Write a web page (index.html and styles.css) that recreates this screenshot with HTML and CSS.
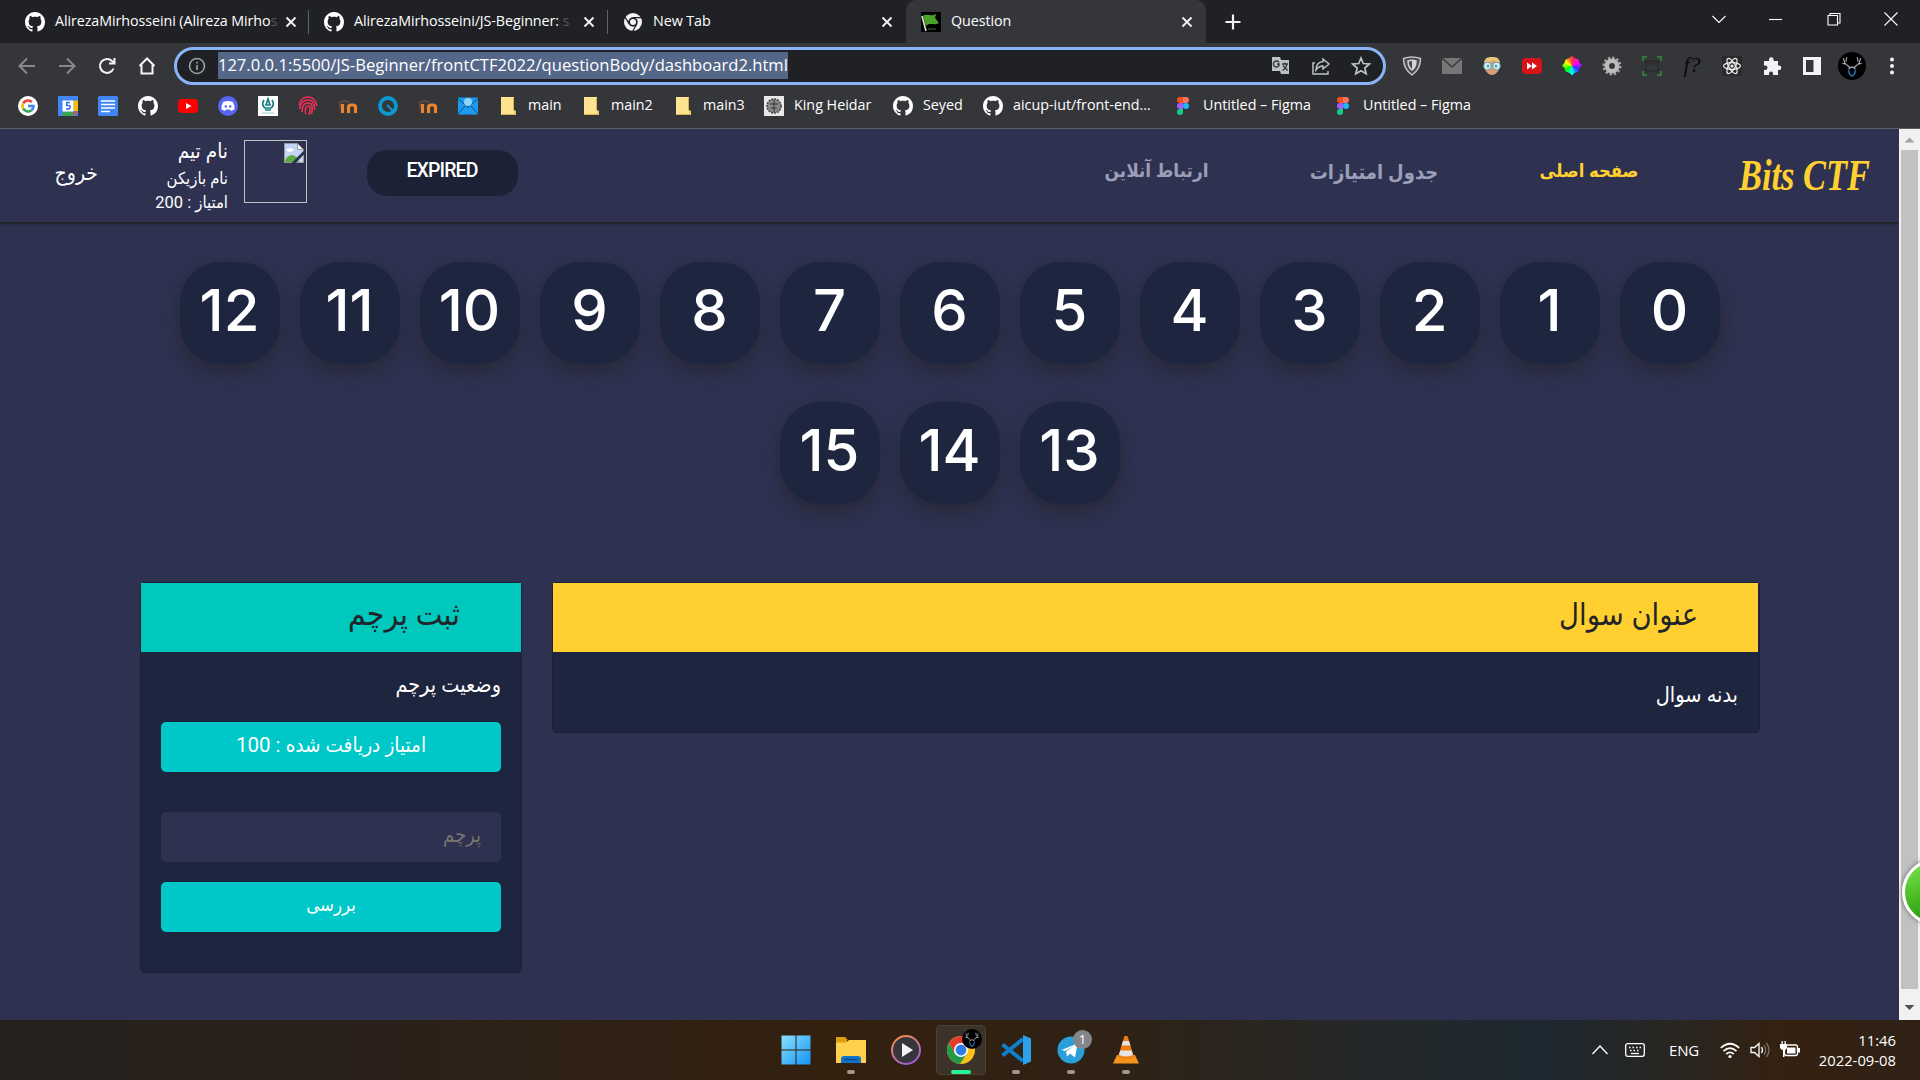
FILE: index.html
```html
<!DOCTYPE html>
<html lang="fa">
<head>
<meta charset="utf-8">
<title>Question</title>
<link rel="stylesheet" href="styles.css">
</head>
<body>
<svg class="defs" width="0" height="0" aria-hidden="true">
  <symbol id="github" viewBox="0 0 16 16"><path fill="#fff" d="M8 0C3.58 0 0 3.58 0 8c0 3.54 2.29 6.53 5.47 7.59.4.07.55-.17.55-.38 0-.19-.01-.82-.01-1.49-2.01.37-2.53-.49-2.69-.94-.09-.23-.48-.94-.82-1.13-.28-.15-.68-.52-.01-.53.63-.01 1.08.58 1.23.82.72 1.21 1.87.87 2.33.66.07-.52.28-.87.51-1.07-1.78-.2-3.64-.89-3.64-3.95 0-.87.31-1.59.82-2.15-.08-.2-.36-1.02.08-2.12 0 0 .67-.21 2.2.82.64-.18 1.32-.27 2-.27s1.36.09 2 .27c1.53-1.04 2.2-.82 2.2-.82.44 1.1.16 1.92.08 2.12.51.56.82 1.27.82 2.15 0 3.07-1.87 3.75-3.65 3.95.29.25.54.73.54 1.48 0 1.07-.01 1.93-.01 2.2 0 .21.15.46.55.38A8.01 8.01 0 0 0 16 8c0-4.42-3.58-8-8-8z"/></symbol>
  <symbol id="x" viewBox="0 0 12 12"><path d="M1.500 1.500l9 9M10.500 1.500l-9 9" stroke="#f1f3f4" stroke-width="1.900"/></symbol>
  <symbol id="folder" viewBox="0 0 20 20"><path fill="#ffe391" d="M3 1h13v13l2 1v4H3z"/><path fill="none" stroke="#d9b24c" d="M3.500 18.500h13.500v-3l-1.500-1V2"/></symbol>
  <symbol id="figma" viewBox="0 0 20 20"><path fill="#f24e1e" d="M10 1H7a3 3 0 0 0 0 6h3z"/><path fill="#ff7262" d="M10 1h3a3 3 0 0 1 0 6h-3z"/><path fill="#a259ff" d="M10 7H7a3 3 0 0 0 0 6h3z"/><circle cx="13" cy="10" r="3" fill="#1abcfe"/><path fill="#0acf83" d="M7 13h3v3a3 3 0 1 1-3-3z"/></symbol>
  <symbol id="moodle" viewBox="0 0 20 20"><path fill="none" stroke="#e98427" stroke-width="3.200" d="M4.500 8v9M10.500 17v-5.500a2.500 2.500 0 0 1 2.500-2.500h2a2.500 2.500 0 0 1 2.500 2.500V17"/><path fill="none" stroke="#5c4a3c" stroke-width="2" d="M1 7l6-2.500 4 2M2 7v5"/></symbol>
  <symbol id="stag" viewBox="0 0 32 32"><circle cx="16" cy="16" r="16" fill="#000"/><path fill="none" stroke="#a9adb3" stroke-width="1.300" d="M14 18L8 13 6 7M10 14l-5-1M9 11l1-5M18 18l6-5 2-6M22 14l5-1M23 11l-1-5M12 19l4-2 4 2"/><path fill="none" stroke="#2670b0" stroke-width="1.700" d="M12 20l1 5 3 3M20 20l-1 5-3 3"/></symbol>
</svg>

<div class="browser">
  <div class="tabstrip">
    <div class="tab"><svg class="i20"><use href="#github"/></svg><span class="tab-title">AlirezaMirhosseini (Alireza Mirho<i>s</i></span><svg class="i12"><use href="#x"/></svg></div>
    <div class="tab"><svg class="i20"><use href="#github"/></svg><span class="tab-title">AlirezaMirhosseini/JS-Beginner: <i>s</i></span><svg class="i12"><use href="#x"/></svg></div>
    <div class="tab last"><svg class="i20" viewBox="0 0 20 20"><circle cx="10" cy="10" r="9" fill="#f1f3f4"/><circle cx="10" cy="10" r="4.700" fill="#202124"/><circle cx="10" cy="10" r="3" fill="#f1f3f4"/><path d="M10 5.700h9M6.300 12.200L2 5M13.700 12.200L9.500 19.500" stroke="#202124" stroke-width="1.300"/></svg><span class="tab-title">New Tab</span><svg class="i12"><use href="#x"/></svg></div>
    <div class="tab active"><svg class="i20" viewBox="0 0 20 20"><path d="M0 0h20v20H0z"/><path d="M1 4l4 15" stroke="#e4e8dc" stroke-width="1.600"/><path fill="#4ba22b" d="M2 4c4-3 7 1 13-2l-1 4 4 5c-5 3-9-1-13 3z"/><path d="M7 17h8" stroke="#20501a" stroke-width="1.500"/></svg><span class="tab-title">Question</span><svg class="i12"><use href="#x"/></svg></div>
    <svg class="newtab" viewBox="0 0 16 16"><path d="M8 .5v15M.5 8h15" stroke="#f1f3f4" stroke-width="2.200"/></svg>
    <div class="winctl">
      <svg viewBox="0 0 14 14"><path d="M.5 4L7 10.500 13.500 4"/></svg>
      <svg viewBox="0 0 14 14"><path d="M0 7.500h13"/></svg>
      <svg viewBox="0 0 14 14"><path d="M1 3.500h9.500V13H1zM3 3.500v-2h10v9.500h-2.500"/></svg>
      <svg viewBox="0 0 14 14"><path d="M.5.5l13 13M13.500.5l-13 13"/></svg>
    </div>
  </div>

  <div class="toolbar">
    <div class="nav-buttons">
      <svg class="dim" viewBox="0 0 20 20"><path d="M18 10H3M10 2.500L2.500 10l7.500 7.500"/></svg>
      <svg class="dim" viewBox="0 0 20 20"><path d="M2 10h15M10 2.500l7.500 7.500-7.500 7.500"/></svg>
      <svg viewBox="0 0 20 20"><path d="M16.500 12.500A7 7 0 1 1 15 5l2 2M17.500 2v5.500H12"/></svg>
      <svg viewBox="0 0 20 20"><path d="M4.500 9v8.500h11V9M2.500 10L10 2.500l7.500 7.500"/></svg>
    </div>
    <div class="omnibox">
      <svg class="i18 info" viewBox="0 0 18 18"><circle cx="9" cy="9" r="7.500" fill="none" stroke="#9aa0a6" stroke-width="1.600"/><path d="M9 8v5M9 4.800v1.800" stroke="#9aa0a6" stroke-width="1.700"/></svg>
      <span class="url">127.0.0.1:5500/JS-Beginner/frontCTF2022/questionBody/dashboard2.html</span>
      <div class="omni-actions">
        <svg viewBox="0 0 20 20"><path fill="#bdc1c6" d="M1 1h8l1 3h8v14h-8l-1-3H1z"/><path fill="none" stroke="#35363a" stroke-width="1.400" d="M8 6.500A3 3 0 1 0 8 9.500V8H6M11 8h6M14 6.500V8M16 8c-.5 3-2 5-4.500 6.500M12 9.500l4.500 5"/></svg>
        <svg viewBox="0 0 20 20"><path fill="none" stroke="#bdc1c6" stroke-width="1.500" d="M4 7H2v11h15v-3M12 3l6 5-6 5v-3c-3 0-5 1-7 4 0-5 3-8 7-8.500z"/></svg>
        <svg viewBox="0 0 20 20"><path fill="none" stroke="#bdc1c6" stroke-width="1.700" d="M10 2l2.300 5.500 6 .5-4.500 4 1.400 5.800L10 14.700l-5.200 3.100L6.200 12 1.700 8l6-.5z"/></svg>
      </div>
    </div>
    <div class="extensions">
      <svg viewBox="0 0 20 20"><path fill="#4a4b4e" stroke="#c5c5c5" stroke-width="1.500" d="M1.500 2.500Q10-.5 18.500 2.500 18.500 13 10 19 1.500 13 1.500 2.500z"/><path fill="none" stroke="#d4d4d4" stroke-width="1.500" d="M6 5q4-1.500 8 0 0 6-4 9-4-3-4-9z"/><path fill="#d4d4d4" d="M10 4.500q2 0 4 .5 0 6-4 9z"/></svg>
      <svg viewBox="0 0 20 20"><path fill="#777" d="M0 2h20v16H0z"/><path fill="none" stroke="#38393c" stroke-width="1.600" d="M0 2l10 9 10-9"/></svg>
      <svg viewBox="0 0 20 20"><path fill="#d6a077" d="M3 5q7-7 14 0v9q-7 10-14 0z"/><path fill="#e8c57b" d="M2 8q0-8 8-7 8-1 8 7-4-3-7-4Q7 8 2 8z"/><circle cx="5.500" cy="10" r="3.800" fill="#dff3f8" stroke="#7194a0"/><circle cx="14.500" cy="10" r="3.800" fill="#dff3f8" stroke="#7194a0"/><circle cx="6" cy="10" r="1.500" fill="#3aa7c9"/><circle cx="14" cy="10" r="1.500" fill="#3aa7c9"/></svg>
      <svg viewBox="0 0 20 20"><rect y="2" width="20" height="16" rx="4" fill="#d7141a"/><path fill="#fff" d="M5 6.500l5 3.500-5 3.500zM10 6.500l5 3.500-5 3.500z"/></svg>
      <div class="wheel"></div>
      <svg viewBox="0 0 20 20"><circle cx="10" cy="10" r="5.200" fill="none" stroke="#bcbcbc" stroke-width="4.500"/><circle cx="10" cy="10" r="8.200" fill="none" stroke="#a9a9a9" stroke-width="2.500" stroke-dasharray="2.300 1.990"/></svg>
      <svg viewBox="0 0 20 20"><path fill="none" stroke="#2e7d32" stroke-width="2" d="M1 5V1h4M15 1h4v4M19 15v4h-4M5 19H1v-4"/><path fill="none" stroke="#2a2b2e" stroke-width="1.500" d="M4 5h12v10H4zM4 7.500h12"/></svg>
      <div class="fq">f?</div>
      <svg viewBox="0 0 20 20"><path fill="#292a2c" d="M0 0h20v20H0z"/><g fill="none" stroke="#eee" stroke-width="1.200"><ellipse cx="10" cy="10" rx="8.500" ry="3.300"/><ellipse cx="10" cy="10" rx="8.500" ry="3.300" transform="rotate(60 10 10)"/><ellipse cx="10" cy="10" rx="8.500" ry="3.300" transform="rotate(120 10 10)"/></g><circle cx="10" cy="10" r="1.600" fill="#eee"/></svg>
      <svg viewBox="0 0 20 20"><path fill="#f1f3f4" d="M2 5h5V3.500a2.300 2.300 0 0 1 4.600 0V5H16v4.500h1a2.300 2.300 0 0 1 0 4.600h-1V19h-5v-1.500a2 2 0 0 0-4 0V19H2v-5h1.300a2.200 2.200 0 0 0 0-4.400H2z"/></svg>
      <svg viewBox="0 0 20 20"><path fill="#f1f3f4" d="M1 1h18v18H1z"/><path fill="#35363a" d="M4 4h7.500v12H4z"/></svg>
      <svg class="avatar"><use href="#stag"/></svg>
      <svg viewBox="0 0 20 20" fill="#f1f3f4"><circle cx="10" cy="3.500" r="2"/><circle cx="10" cy="10" r="2"/><circle cx="10" cy="16.500" r="2"/></svg>
    </div>
  </div>

  <div class="bookmarks">
    <div class="bm"><svg class="i20" viewBox="0 0 20 20"><circle cx="10" cy="10" r="10" fill="#fff"/><g fill="none" stroke-width="2.600"><path stroke="#ea4335" d="M5.200 7.300A5.500 5.500 0 0 1 13.900 6.100"/><path stroke="#fbbc05" d="M5.200 12.700a5.500 5.500 0 0 1 0-5.400"/><path stroke="#34a853" d="M13.500 14.200a5.500 5.500 0 0 1-8.300-1.500"/><path stroke="#4285f4" d="M10 10h5.500a5.500 5.500 0 0 1-2 4.200"/></g></svg></div>
    <div class="bm"><svg class="i20" viewBox="0 0 20 20"><path fill="#4285f4" d="M0 0h20v20H0z"/><path fill="#fbbc04" d="M15.500 4.500H20V15h-4.500z"/><path fill="#34a853" d="M4.500 15.500h11V20h-11z"/><path fill="#ea4335" d="M15.500 15.500H20L15.500 20z"/><path fill="#fff" d="M4.500 4.500h11v11h-11z"/><path fill="none" stroke="#2a6fdc" stroke-width="1.500" d="M12 6.500H8.700v3q3.500-.5 3.500 1.700t-4.200 1.800"/></svg></div>
    <div class="bm"><svg class="i20" viewBox="0 0 20 20"><rect width="20" height="20" rx="1.500" fill="#4285f4"/><path d="M3 5h14M3 8.500h14M3 12h14M3 15.500h9" stroke="#fff" stroke-width="1.700"/></svg></div>
    <div class="bm"><svg class="i20"><use href="#github"/></svg></div>
    <div class="bm"><svg class="i20" viewBox="0 0 20 20"><rect y="3" width="20" height="14" rx="4" fill="#f00"/><path fill="#fff" d="M8 7l5.500 3L8 13z"/></svg></div>
    <div class="bm"><svg class="i20" viewBox="0 0 20 20"><circle cx="10" cy="10" r="10" fill="#5865f2"/><path fill="#fff" d="M5 6q5-2 10 0 2 4 1.500 7.500L13 15l-1-1.500H8L7 15l-3.500-1.500Q3 10 5 6z"/><circle cx="7.800" cy="10.500" r="1.200" fill="#5865f2"/><circle cx="12.200" cy="10.500" r="1.200" fill="#5865f2"/></svg></div>
    <div class="bm"><svg class="i20" viewBox="0 0 20 20"><path fill="#fff" d="M0 0h20v20H0z"/><path fill="none" stroke="#14808a" stroke-width="1.700" d="M6 4q-3 5 1 8h6q4-3 1-8M8 9l2-6 2 6zM7 14h6"/><path stroke="#9ccbd0" d="M4 17h12"/></svg></div>
    <div class="bm"><svg class="i20" viewBox="0 0 20 20"><g fill="none" stroke="#ee2e55" stroke-width="1.600"><path d="M1 9q2-8 9-8t9 9M1.500 13Q3 4 10 4t6.500 10M4 16Q4 7 10 7t3.500 11M7.500 18q-1-8 2.500-8t1 9"/></g></svg></div>
    <div class="bm"><svg class="i20"><use href="#moodle"/></svg></div>
    <div class="bm"><svg class="i20" viewBox="0 0 20 20"><circle cx="10" cy="10" r="8" fill="none" stroke="#0b97d0" stroke-width="3.800"/><path d="M9 9l6 6" stroke="#0b97d0" stroke-width="2"/></svg></div>
    <div class="bm"><svg class="i20"><use href="#moodle"/></svg></div>
    <div class="bm"><svg class="i20" viewBox="0 0 20 20"><path fill="#1d9bf0" d="M0 1.500h20v17H0z"/><path fill="none" stroke="#0a4f86" d="M0 2.500l10 9 10-9M0 18l7-8M20 18l-7-8"/><circle cx="10" cy="6" r="4" fill="#8fd3ff"/></svg></div>
    <div class="bm"><svg class="i20"><use href="#folder"/></svg><span>main</span></div>
    <div class="bm"><svg class="i20"><use href="#folder"/></svg><span>main2</span></div>
    <div class="bm"><svg class="i20"><use href="#folder"/></svg><span>main3</span></div>
    <div class="bm"><svg class="i20" viewBox="0 0 20 20"><path fill="#e8e8e8" d="M0 0h20v20H0z"/><circle cx="10" cy="10" r="7" fill="#8a8a8a" stroke="#444" stroke-width="1.600" stroke-dasharray="2 1"/><path d="M10 4v12M6 8h8M7 12h6" stroke="#333"/></svg><span>King Heidar</span></div>
    <div class="bm"><svg class="i20"><use href="#github"/></svg><span>Seyed</span></div>
    <div class="bm"><svg class="i20"><use href="#github"/></svg><span>aicup-iut/front-end...</span></div>
    <div class="bm"><svg class="i20"><use href="#figma"/></svg><span>Untitled – Figma</span></div>
    <div class="bm"><svg class="i20"><use href="#figma"/></svg><span>Untitled – Figma</span></div>
  </div>
</div>

<div class="viewport">
  <div class="site">
    <header class="site-header">
      <a class="logout" dir="rtl">خروج</a>
      <div class="team" dir="rtl">
        <span class="team-name">نام تیم</span>
        <span class="player">نام بازیکن</span>
        <span class="points">امتیاز : 200</span>
      </div>
      <div class="photo"><svg viewBox="0 0 20 20"><path fill="#c3d6f5" stroke="#9a9a9a" d="M.5.5h13l6 6v13H.5z"/><path fill="#fff" stroke="#9a9a9a" d="M13.500.5v6h6z"/><ellipse cx="6" cy="7" rx="3.500" ry="1.800" fill="#fff"/><path fill="#58ad3c" d="M1 19q0-5 6-7 6 0 8 7z"/><path stroke="#2e3150" stroke-width="3" d="M9 20.500L20.500 9"/></svg></div>
      <div class="timer">EXPIRED</div>
      <nav>
        <a class="n3">ارتباط آنلاین</a>
        <a class="n2">جدول امتیازات</a>
        <a class="n1 current">صفحه اصلی</a>
      </nav>
      <div class="logo"><span>Bits CTF</span></div>
    </header>

    <section class="questions" dir="rtl">
      <a>0</a><a>1</a><a>2</a><a>3</a><a>4</a><a>5</a><a>6</a><a>7</a><a>8</a><a>9</a><a>10</a><a>11</a><a>12</a><a>13</a><a>14</a><a>15</a>
    </section>

    <main class="cards" dir="rtl">
      <article class="card question">
        <h2>عنوان سوال</h2>
        <p>بدنه سوال</p>
      </article>
      <article class="card flag">
        <h2>ثبت پرچم</h2>
        <div class="card-body">
          <div class="status">وضعیت پرچم</div>
          <div class="btn score">امتیاز دریافت شده : 100</div>
          <div class="field">پرچم</div>
          <div class="btn check">بررسی</div>
        </div>
      </article>
    </main>
  </div>
  <div class="scrollbar">
    <svg viewBox="0 0 21 21"><path fill="#a3a3a3" d="M5.500 13.500h10l-5-5z"/></svg>
    <div class="thumb"></div>
    <svg class="down" viewBox="0 0 21 21"><path fill="#505050" d="M5.500 8h10l-5 5z"/></svg>
  </div>
  <div class="bubble"></div>
</div>

<footer class="taskbar">
  <div class="apps">
    <div class="app"><svg viewBox="0 0 30 30"><defs><linearGradient id="w" x2="1" y2="1"><stop stop-color="#8be2ff"/><stop offset="1" stop-color="#1292f5"/></linearGradient></defs><path fill="url(#w)" d="M.5.5h14v14H.5zM15.500.5h14v14h-14zM.5 15.500h14v14H.5zM15.500 15.500h14v14h-14z"/></svg></div>
    <div class="app open"><svg viewBox="0 0 30 30"><path fill="#e09d0e" d="M0 2h9l3 3h-1v5H0z"/><path fill="#ffd04a" d="M0 7.500h10l3-2.500h17v23H0z"/><path fill="#1273c8" d="M5 28v-4q0-3 3-3h14q3 0 3 3v4z"/><path stroke="#0b4b8a" stroke-width="1.500" d="M8 24.500h14"/></svg></div>
    <div class="app"><svg viewBox="0 0 30 30"><defs><linearGradient id="m" x2=".6" y2="1"><stop stop-color="#ff8f3c"/><stop offset="1" stop-color="#9a62d8"/></linearGradient></defs><circle cx="15" cy="15" r="14" fill="#36363a" stroke="url(#m)" stroke-width="2"/><path fill="#f4f4f4" d="M11 8l11 7-11 7z"/></svg></div>
    <div class="app open focus"><svg viewBox="0 0 30 30"><circle cx="15" cy="15" r="14" fill="#fbc116"/><path fill="#e33b2e" d="M2.900 8A14 14 0 0 1 27.100 8H15l-6 10.500z"/><path fill="#229a4a" d="M2.900 8A14 14 0 0 0 14 29l7-10.500H9z"/><circle cx="15" cy="15" r="7" fill="#fff"/><circle cx="15" cy="15" r="5.400" fill="#2f7de9"/></svg><svg class="stag"><use href="#stag"/></svg></div>
    <div class="app open"><svg viewBox="0 0 30 30"><path fill="none" stroke="#0f7fcb" stroke-width="4" d="M1.500 9.500L22 26M1.500 20.500L22 4"/><path fill="#2ea0ec" d="M22 0l8 3.500v23L22 30z"/></svg></div>
    <div class="app open"><svg viewBox="0 0 30 30"><circle cx="15" cy="15" r="13.500" fill="#2b9fd9"/><path fill="#fff" d="M5.500 15l16-6.500-2.500 14-5-4-3 3-1-5 8-5.500-9 5z"/></svg><b class="badge">1</b></div>
    <div class="app open"><svg viewBox="0 0 30 30"><path fill="#f5941c" d="M6 20h18l4 8.500H2z"/><path fill="#f07d12" d="M13.500 1h3L23 22q-8 4-16 0z"/><path fill="#e4e4e4" d="M12 6h6l1.400 4.500h-8.800zM9.300 15.500h11.400L22 20q-7 3-14 0z"/></svg></div>
  </div>
  <div class="tray">
    <svg class="t-caret" viewBox="0 0 16 16"><path d="M.5 12L8 4l7.500 8"/></svg>
    <svg class="t-kbd" viewBox="0 0 20 20"><rect x=".7" y="3.700" width="18.600" height="12.600" rx="2"/><path d="M4 7.500h12" stroke-dasharray="1.500 2"/><path d="M5 10.500h10" stroke-dasharray="1.500 2"/><path d="M6 13.500h8"/></svg>
    <span class="lang">ENG</span>
    <svg class="t-wifi" viewBox="0 0 20 20"><path d="M.8 8q9.200-8.500 18.400 0M3.500 11.200q6.500-6 13 0M6.300 14q3.700-3.200 7.400 0" stroke-width="1.700"/><circle cx="10" cy="16.500" r="1.600" fill="#fff" stroke="none"/></svg>
    <svg class="t-vol" viewBox="0 0 20 20"><path d="M1 7.500h3.500L9 3.500v13l-4.500-4H1z"/><path d="M11.500 7q2 3 0 6"/><path d="M14 5q3.500 5 0 10M16.500 3q5 7 0 14" stroke="#77706a"/></svg>
    <svg class="t-bat" viewBox="0 0 20 20"><rect x="4.500" y="5" width="13" height="10.500" rx="2"/><path fill="#fff" stroke="none" d="M7 7.500h8.500v6H7zM18 8h2v4.500h-2zM0 4h7v4q-1 2-2.500 2v7H3v-7Q1 10 0 8zM1.500 1h1.300v3H1.500zM4.500 1h1.300v3H4.500z"/></svg>
    <div class="clock"><span>11:46</span><span>2022-09-08</span></div>
  </div>
</footer>
</body>
</html>
```
FILE: styles.css
```css
* { box-sizing: border-box; }
body {
  margin: 0;
  width: 1920px;
  height: 1080px;
  overflow: hidden;
  display: flex;
  flex-direction: column;
  font-family: "Open Sans", "Noto Sans", sans-serif;
  color: #fff;
}
svg { display: block; flex: none; }
.defs { position: absolute; }
.i20 { width: 20px; height: 20px; }
.i18 { width: 18px; height: 18px; }
.i12 { width: 12px; height: 12px; }

/* Browser frame */
.browser { height: 129px; background: #35363a; border-bottom: 1px solid #5f6063; font-size: 14.300px; }
.tabstrip { height: 43px; background: #202124; display: flex; align-items: center; padding-left: 10px; }
.tab { width: 299px; height: 43px; display: flex; align-items: center; padding: 0 13px 0 15px; position: relative; }
.tab:not(.last):not(.active)::after { content: ""; position: absolute; right: 0; top: 10px; width: 1px; height: 24px; background: #5f6368; }
.tab.last { width: 298px; }
.tab-title { flex: 1; margin-left: 10px; margin-right: 8px; white-space: nowrap; line-height: 24px; padding-bottom: 1px; letter-spacing: -.08px; }
.tab-title i { font-style: normal; color: #55565a; }
.tab.active { width: 300px; background: #35363a; border-radius: 10px 10px 0 0; }
.newtab { width: 16px; height: 16px; margin-left: 19px; }
.winctl { margin-left: auto; margin-right: 22px; margin-bottom: 6px; display: flex; gap: 43.500px; }
.winctl svg { width: 14px; height: 14px; fill: none; stroke: #fff; stroke-width: 1.100; }

.toolbar { height: 44px; display: flex; align-items: center; padding: 1px 18px 0 17px; }
.nav-buttons { display: flex; gap: 20px; width: 157px; }
.nav-buttons svg { width: 20px; height: 20px; fill: none; stroke: #f1f3f4; stroke-width: 2; }
.nav-buttons .dim { stroke: #87888b; }
.omnibox { width: 1213px; height: 38px; border: 3px solid #8ab4f8; border-radius: 19px; background: #202124; display: flex; align-items: center; padding: 0 12px 0 11px; }
.url { margin-left: 12px; background: #556788; font-size: 16.600px; line-height: 25px; padding-bottom: 2px; white-space: nowrap; }
.omni-actions { margin-left: auto; display: flex; gap: 20px; }
.omni-actions svg { width: 20px; height: 20px; }
.extensions { margin-left: 16px; display: flex; align-items: center; gap: 20px; }
.extensions svg, .wheel, .fq { width: 20px; height: 20px; }
.extensions .avatar { width: 28px; height: 28px; margin: 0 -4px; }
.wheel { border-radius: 50%; background: conic-gradient(#f33, #f0f, #33f, #0ff, #0f0, #ff0, #f33); clip-path: polygon(50% 0, 62% 12%, 82% 20%, 88% 38%, 100% 50%, 88% 62%, 82% 80%, 62% 88%, 50% 100%, 38% 88%, 18% 80%, 12% 62%, 0 50%, 12% 38%, 18% 20%, 38% 12%); }
.fq { font: italic 22px/18px "Liberation Serif", serif; color: #08090a; text-align: center; white-space: nowrap; }

.bookmarks { height: 38px; display: grid; align-items: center; padding-left: 18px; grid-template-columns: repeat(12, 40px) 83px 92px 91px 129px 90px 190px 160px 160px; }
.bm { display: flex; align-items: center; gap: 10px; white-space: nowrap; }
.bm span { line-height: 18px; padding-bottom: 2px; }

/* Page */
.viewport { height: 891px; display: flex; position: relative; overflow: hidden; }
.site { width: 1899px; background: #2e3150; font-family: Roboto, "DejaVu Sans Condensed", sans-serif; }
.site-header { height: 93px; display: flex; align-items: center; padding: 0 29px 0 55px; box-shadow: 0 3px 2px -1px #222; white-space: nowrap; }
.logout { width: 43px; font-size: 21px; margin-top: -6px; }
.team { width: 130px; height: 93px; display: flex; flex-direction: column; padding-top: 8px; }
.team-name { font-size: 20.500px; line-height: 29px; }
.player { font-size: 16.500px; line-height: 26px; }
.points { font-size: 16.500px; line-height: 22px; }
.team span { align-self: flex-start; }
.photo { width: 63px; height: 63px; margin-left: 16px; margin-bottom: 8px; border: 1px solid #c0c0c0; padding: 2px; display: flex; justify-content: flex-end; }
.photo svg { width: 20px; height: 20px; }
.timer { width: 151px; height: 46px; margin-left: 60px; margin-bottom: 5px; border-radius: 20px; background: #1c2136; display: flex; align-items: center; justify-content: center; font-size: 19.500px; font-weight: 500; letter-spacing: -.9px; padding: 0 1px 5px 0; }
nav { margin-left: auto; display: flex; gap: 101px; margin-right: 101px; margin-top: -7px; font-weight: 700; font-size: 20px; color: #9b9eb9; }
nav a { display: flex; justify-content: center; direction: rtl; }
nav .current { color: #ffd02f; }
.n1 { width: 98px; font-size: 18.300px; }
.n2 { width: 130px; }
.n3 { width: 103px; font-size: 18.800px; }
.logo { width: 131px; font: italic 700 45px/1 "Liberation Serif", serif; color: #ffd02f; }
.logo span { display: inline-block; transform: scaleX(.765); transform-origin: left; }

.questions { width: 1600px; margin: 40px auto 0; display: flex; flex-wrap: wrap; justify-content: center; gap: 38px 20px; }
.questions a { width: 100px; height: 102px; border-radius: 40px; background: #1e253f; box-shadow: 0 8px 16px rgba(34, 34, 34, .5); display: flex; align-items: center; justify-content: center; padding-bottom: 6px; font: 500 58px/1 Inter, sans-serif; }

.cards { display: flex; align-items: flex-start; justify-content: space-between; margin: 78px 139px 0 140px; }
.card { background: #1e253f; border: 1px solid #1b2238; border-radius: 5px; }
.card h2 { margin: 0; height: 69px; padding: 0 61px; font-size: 30.500px; font-weight: 400; line-height: 64px; color: #212529; }
.question { width: 1208px; height: 151px; }
.question h2 { background: #ffd02f; margin-right: 1px; padding-right: 60px; }
.question p { margin: 0; padding: 27px 21px; font-size: 21.500px; line-height: 32px; }
.flag { width: 382px; height: 391px; }
.flag h2 { background: #00c8bd; font-size: 31.500px; }
.card-body { padding: 17px 20px 0; display: flex; flex-direction: column; }
.status { height: 53px; font-size: 21.400px; line-height: 32px; }
.btn { height: 50px; border-radius: 5px; background: #00c8c8; font-size: 20.500px; line-height: 46px; text-align: center; }
.score { margin-bottom: 40px; }
.check { font-size: 18.500px; font-weight: 500; }
.field { height: 50px; border-radius: 5px; background: #2e3150; color: #77756f; margin-bottom: 20px; padding: 0 20px; font-size: 20px; line-height: 46px; }

.scrollbar { width: 21px; background: #f1f1f1; display: flex; flex-direction: column; }
.scrollbar svg { width: 21px; height: 21px; }
.thumb { width: 17px; height: 839px; margin-left: 2px; background: #c1c1c1; }
.scrollbar .down { margin-top: auto; margin-bottom: 2px; }
.bubble { position: absolute; left: 1902px; top: 730px; width: 66px; height: 66px; border-radius: 50%; border: 3px solid #fff; background: linear-gradient(165deg, #7be54c, #48bc22 50%, #1c8a0c); box-shadow: 0 0 5px rgba(0, 0, 0, .5); }

/* Taskbar */
.taskbar { height: 60px; position: relative; background: linear-gradient(90deg, #25211e 0, #2b211a 20%, #33200f 43%, #2f2215 58%, #24282a 72%, #1d2830 80%, #2a2520 88%, #352110 93%, #2f2117 100%); }
.apps { height: 60px; display: flex; gap: 5px; padding: 5px 0 0 771px; }
.app { width: 50px; height: 50px; position: relative; display: flex; justify-content: center; align-items: center; border-radius: 5px; }
.app > svg { width: 30px; height: 30px; }
.open::after { content: ""; position: absolute; left: 21px; bottom: 1px; width: 8px; height: 4px; border-radius: 2px; background: #9d9690; }
.focus { background: #3d3229; box-shadow: inset 0 0 0 1px #4a4038; }
.focus::after { left: 15px; width: 20px; background: #25f590; }
.app .stag { position: absolute; left: 26px; top: 4px; width: 20px; height: 20px; }
.badge { position: absolute; left: 27px; top: 5px; width: 19px; height: 19px; border-radius: 50%; background: #85868a; font-size: 13px; font-weight: 400; line-height: 19px; text-align: center; }
.tray { position: absolute; right: 24px; top: 0; height: 60px; display: flex; align-items: center; }
.tray svg { width: 20px; height: 20px; fill: none; stroke: #fff; stroke-width: 1.300; }
.tray .t-caret { width: 16px; height: 16px; margin-right: 17px; }
.lang { width: 28px; font-size: 15px; margin: 0 23px 0 24px; letter-spacing: -.2px; }
.t-wifi, .t-vol { margin-right: 10px; }
.clock { width: 96px; display: flex; flex-direction: column; align-items: flex-end; font-size: 14.800px; line-height: 20px; padding-bottom: 1px; }
```
